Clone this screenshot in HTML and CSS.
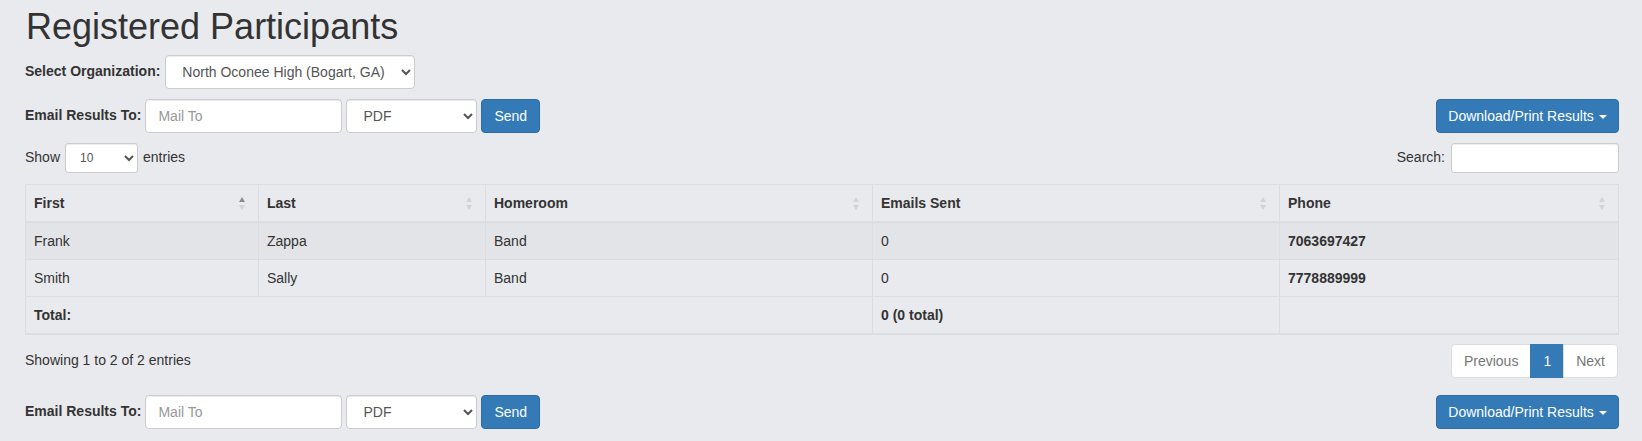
FILE: index.html
```html
<!DOCTYPE html>
<html lang="en">
<head>
  <meta charset="UTF-8" />
  <meta name="viewport" content="width=device-width, initial-scale=1.0" />
  <title>Registered Participants</title>

  <link rel="stylesheet" href="styles.css">
</head>
<body>

  <div class="page">
    <h1 class="title">Registered Participants</h1>

    <!-- Organization picker -->
    <div class="org-row">
      <label for="org">Select Organization:</label>
      <select id="org" class="control org-select">
        <option>North Oconee High (Bogart, GA)</option>
      </select>
    </div>

    <!-- Email results (top) -->
    <div class="action-row">
      <div class="email-form">
        <label>Email Results To:</label>
        <input type="email" class="control mail-input" placeholder="Mail To" />
        <select class="control format-select">
          <option>PDF</option>
        </select>
        <button class="btn-send">Send</button>
      </div>
      <button class="btn-download">Download/Print Results <span class="caret"></span></button>
    </div>

    <!-- Table controls -->
    <div class="table-top">
      <div class="length">
        Show
        <select class="control control-sm length-select">
          <option>10</option>
        </select>
        entries
      </div>
      <div class="filter">
        Search:
        <input type="search" class="control control-sm search-input" />
      </div>
    </div>

    <table class="data-table">
      <colgroup>
        <col style="width: 233px">
        <col style="width: 227px">
        <col style="width: 387px">
        <col style="width: 407px">
        <col>
      </colgroup>
      <thead>
        <tr>
          <th class="sorting sorting-asc">First</th>
          <th class="sorting">Last</th>
          <th class="sorting">Homeroom</th>
          <th class="sorting">Emails Sent</th>
          <th class="sorting">Phone</th>
        </tr>
      </thead>
      <tbody>
        <tr class="odd">
          <td>Frank</td>
          <td>Zappa</td>
          <td>Band</td>
          <td>0</td>
          <td><b>7063697427</b></td>
        </tr>
        <tr>
          <td>Smith</td>
          <td>Sally</td>
          <td>Band</td>
          <td>0</td>
          <td><b>7778889999</b></td>
        </tr>
      </tbody>
      <tfoot>
        <tr>
          <th colspan="3">Total:</th>
          <th>0 (0 total)</th>
          <th></th>
        </tr>
      </tfoot>
    </table>

    <div class="table-bottom">
      <div class="info">Showing 1 to 2 of 2 entries</div>
      <ul class="pagination">
        <li class="disabled"><a href="#">Previous</a></li>
        <li class="active"><a href="#">1</a></li>
        <li class="disabled"><a href="#">Next</a></li>
      </ul>
    </div>

    <!-- Email results (bottom) -->
    <div class="action-row action-row-bottom">
      <div class="email-form">
        <label>Email Results To:</label>
        <input type="email" class="control mail-input" placeholder="Mail To" />
        <select class="control format-select">
          <option>PDF</option>
        </select>
        <button class="btn-send">Send</button>
      </div>
      <button class="btn-download">Download/Print Results <span class="caret"></span></button>
    </div>
  </div>

</body>
</html>
```

FILE: styles.css
```css
body {
  font-family: "Liberation Sans", Arial, sans-serif;
  font-size: 14px;
  line-height: 1.42857;
  color: #333;
  background-color: #e9eaee;
  margin: 0;
  padding: 0;
}

.page {
  padding: 0 23px 0 25px;
}

.title {
  font-size: 36px;
  font-weight: normal;
  line-height: 40px;
  margin: 7px 0 0 1px;
  color: #333;
}

label {
  font-size: 14px;
  font-weight: bold;
}

.control {
  box-sizing: border-box;
  height: 34px;
  padding: 6px 12px;
  font-family: inherit;
  font-size: 14px;
  color: #555;
  background-color: #fff;
  border: 1px solid #ccc;
  border-radius: 4px;
  box-shadow: inset 0 1px 1px rgba(0, 0, 0, 0.075);
}

.control::placeholder {
  color: #999;
}

.control-sm {
  height: 30px;
  padding: 5px 10px;
  font-size: 12px;
  border-radius: 3px;
}

.org-row {
  display: flex;
  align-items: center;
  gap: 5px;
  margin-top: 8px;
}

.org-select {
  width: 250px;
}

.action-row {
  display: flex;
  justify-content: space-between;
  align-items: center;
  margin-top: 10px;
}

.action-row-bottom {
  margin-top: 17px;
}

.email-form {
  display: flex;
  align-items: center;
  gap: 4px;
}

.mail-input {
  width: 197px;
}

.format-select {
  width: 131px;
}

.btn-send {
  box-sizing: border-box;
  height: 34px;
  padding: 0 12px;
  font-family: inherit;
  font-size: 14px;
  color: #fff;
  background-color: #337ab7;
  border: 1px solid #2e6da4;
  border-radius: 4px;
  cursor: pointer;
}

.btn-download {
  box-sizing: border-box;
  height: 34px;
  width: 183px;
  padding: 0 10px;
  font-family: inherit;
  font-size: 14px;
  color: #fff;
  background-color: #337ab7;
  border: 1px solid #2e6da4;
  border-radius: 4px;
  cursor: pointer;
  white-space: nowrap;
}

.caret {
  display: inline-block;
  width: 0;
  height: 0;
  margin-left: 1px;
  vertical-align: middle;
  border-top: 4px solid #fff;
  border-left: 4px solid transparent;
  border-right: 4px solid transparent;
}

.table-top {
  display: flex;
  justify-content: space-between;
  align-items: center;
  margin-top: 10px;
}

.length {
  display: flex;
  align-items: center;
  gap: 5px;
  font-size: 14px;
}

.length-select {
  width: 73px;
}

.filter {
  display: flex;
  align-items: center;
  gap: 6px;
  font-size: 14px;
}

.search-input {
  width: 168px;
}

.data-table {
  width: 100%;
  margin-top: 11px;
  table-layout: fixed;
  border-collapse: collapse;
  border: 1px solid #dcdde0;
}

.data-table th,
.data-table td {
  padding: 8px;
  line-height: 20px;
  text-align: left;
  border: 1px solid #dcdde0;
}

.data-table thead th {
  position: relative;
  border-bottom-width: 2px;
}

.data-table tbody tr.odd {
  background-color: #e3e4e8;
}

.data-table tfoot th {
  border-bottom-width: 2px;
}

/* sort arrows */
.sorting::before,
.sorting::after {
  content: "";
  position: absolute;
  right: 13px;
  width: 0;
  height: 0;
  border-left: 3px solid transparent;
  border-right: 3px solid transparent;
}

.sorting::before {
  top: 12px;
  border-bottom: 5px solid #d2d3d7;
}

.sorting::after {
  top: 20px;
  border-top: 5px solid #d2d3d7;
}

.sorting-asc::before {
  border-bottom-color: #8b8c90;
}

.table-bottom {
  display: flex;
  justify-content: space-between;
  align-items: center;
  margin-top: 9px;
}

.info {
  font-size: 14px;
}

.pagination {
  display: flex;
  list-style: none;
  margin: 0 1px 0 0;
  padding: 0;
}

.pagination li a {
  display: block;
  padding: 6px 12px;
  line-height: 20px;
  font-size: 14px;
  color: #337ab7;
  text-decoration: none;
  background-color: #fff;
  border: 1px solid #ddd;
  margin-left: -1px;
}

.pagination li:first-child a {
  margin-left: 0;
  border-radius: 4px 0 0 4px;
}

.pagination li:last-child a {
  border-radius: 0 4px 4px 0;
}

.pagination li.disabled a {
  color: #777;
}

.pagination li.active a {
  color: #fff;
  background-color: #337ab7;
  border-color: #337ab7;
}
```
